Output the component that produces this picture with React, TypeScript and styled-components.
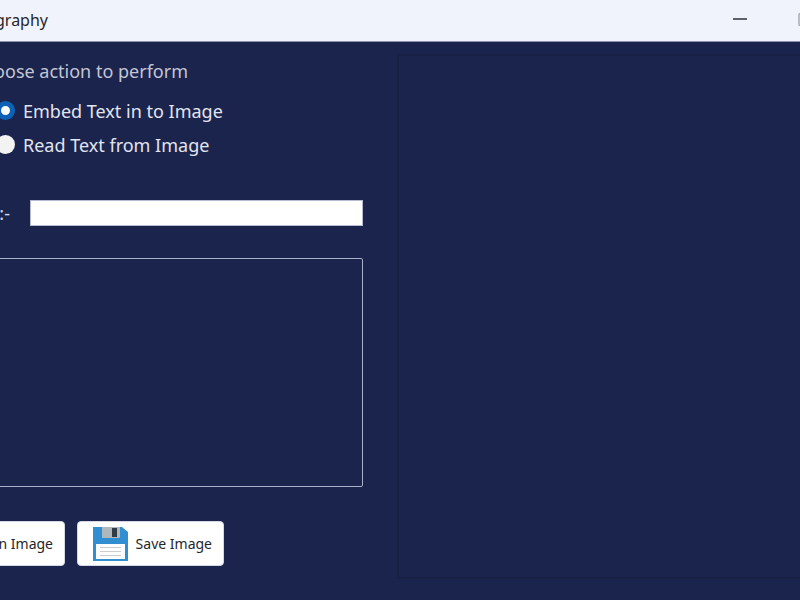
import React, { useState } from "react";
import styled, { createGlobalStyle } from "styled-components";

const GlobalStyle = createGlobalStyle`
  *, *::before, *::after { box-sizing: border-box; }
  body {
    margin: 0;
    overflow: hidden;
    background: #1b244d;
    font-family: "Noto Sans", sans-serif;
  }
`;

const Window = styled.div`
  display: flex;
  flex-direction: column;
  height: 100vh;
  overflow: hidden;
`;

const TitleBar = styled.header`
  display: flex;
  align-items: center;
  height: 42px;
  padding-bottom: 2px;
  flex: none;
  background: #f0f3fb;
  border-bottom: 1px solid #8d95ae;
`;

const TitleSlot = styled.div`
  display: flex;
  justify-content: flex-end;
  width: 48px;
  margin-right: auto;
`;

const Title = styled.h1`
  margin: 0;
  font-size: 16px;
  font-weight: 400;
  line-height: 24px;
  color: #25272d;
`;

const WindowButton = styled.button`
  display: flex;
  flex: none;
  align-items: center;
  justify-content: center;
  width: 60px;
  height: 36px;
  padding: 0;
  border: 0;
  background: transparent;
`;

const MaximizeButton = styled(WindowButton)`
  width: 30px;
  justify-content: flex-end;
`;

const Content = styled.main`
  display: flex;
  flex: 1;
  gap: 34px;
  padding: 12px 0 21px;
`;

const Form = styled.form`
  display: flex;
  flex-direction: column;
  flex: none;
  width: 363px;
`;

const Choices = styled.fieldset`
  margin: 0;
  padding: 0;
  border: 0;
  min-width: 0;
`;

const Legend = styled.legend`
  display: flex;
  justify-content: flex-end;
  width: 188px;
  padding: 4px 0 10px;
  font-size: 18px;
  line-height: 26px;
  white-space: nowrap;
  color: #c3c6d2;
`;

const Choice = styled.label`
  display: flex;
  align-items: center;
  gap: 8px;
  height: 34px;
  margin-left: -4px;
  font-size: 18px;
  color: #e2e5ef;
`;

const Radio = styled.input`
  appearance: none;
  flex: none;
  width: 19px;
  height: 19px;
  margin: 0 0 2px;
  border-radius: 50%;
  background: #f3f4f2;
  &:checked {
    background: #fff;
    border: 5px solid #0d62b5;
  }
`;

const Field = styled.div`
  display: flex;
  align-items: center;
  gap: 20px;
  margin-top: 38px;
`;

const FieldLabel = styled.label`
  display: flex;
  justify-content: flex-end;
  flex: none;
  width: 10px;
  font-size: 18px;
  line-height: 22px;
  color: #d3d7e6;
`;

const TextInput = styled.input`
  flex: 1;
  min-width: 0;
  height: 26px;
  padding: 2px 6px;
  border: 1px solid #b4bbd2;
  border-radius: 0;
  background: #fff;
  font: inherit;
`;

const Message = styled.textarea`
  flex: 1;
  margin: 32px 0 34px -8px;
  padding: 8px;
  border: 1px solid #a9b0c9;
  border-radius: 2px;
  background: transparent;
  color: #e2e5ef;
  font: inherit;
  resize: none;
`;

const Actions = styled.div`
  display: flex;
  gap: 12px;
  margin: 0 0 13px -82px;
`;

const ActionButton = styled.button`
  display: flex;
  align-items: center;
  justify-content: flex-end;
  gap: 8px;
  flex: none;
  width: 147px;
  height: 45px;
  padding: 0 11px 0 0;
  border: 1px solid #d5d8e4;
  border-radius: 4px;
  background: #fff;
  color: #25262b;
  font-family: inherit;
  font-size: 14px;
  white-space: nowrap;
`;

const Preview = styled.section`
  flex: 1;
  border: 2px solid #182044;
  border-right: 0;
`;

const FloppyIcon = () => (
  <svg width="35" height="35" viewBox="0 0 35 35" aria-hidden="true">
    <path d="M0 1h29l6 5v29H0z" fill="#318ed0" />
    <path d="M9 1h18v10q0 1-1 1H10q-1 0-1-1z" fill="#aeb8bd" />
    <path d="M19 2h5v9h-5z" fill="#303b43" />
    <path d="M3 18h29v15H3z" fill="#fdfdfd" />
    <path d="M7 21.5h21M7 25.5h21M7 29.5h21" stroke="#c9cdcf" strokeWidth="1" />
  </svg>
);

const FolderIcon = () => (
  <svg width="35" height="35" viewBox="0 0 35 35" aria-hidden="true">
    <path d="M1 6h12l3 4h17v20H1z" fill="#e9b44c" />
    <path d="M1 14h33v16H1z" fill="#f7cf74" />
  </svg>
);

export default function App() {
  const [mode, setMode] = useState("embed");
  return (
    <>
      <GlobalStyle />
      <Window>
        <TitleBar>
          <TitleSlot>
            <Title>Steganography</Title>
          </TitleSlot>
          <WindowButton type="button" aria-label="Minimize">
            <svg width="14" height="4" viewBox="0 0 14 4">
              <path d="M0 1h14" stroke="#383a42" strokeWidth="1.6" />
            </svg>
          </WindowButton>
          <MaximizeButton type="button" aria-label="Maximize">
            <svg width="2" height="13" viewBox="0 0 2 13">
              <path d="M2 .5Q1 .5 1 2v9q0 1.5 1 1.5" fill="none" stroke="#a9abb5" strokeWidth="1.5" />
            </svg>
          </MaximizeButton>
        </TitleBar>
        <Content>
          <Form onSubmit={(e) => e.preventDefault()}>
            <Choices>
              <Legend>Choose action to perform</Legend>
              <Choice>
                <Radio type="radio" name="mode" checked={mode === "embed"} onChange={() => setMode("embed")} />
                Embed Text in to Image
              </Choice>
              <Choice>
                <Radio type="radio" name="mode" checked={mode === "read"} onChange={() => setMode("read")} />
                Read Text from Image
              </Choice>
            </Choices>
            <Field>
              <FieldLabel htmlFor="text">Text:-</FieldLabel>
              <TextInput id="text" type="text" />
            </Field>
            <Message aria-label="Message" />
            <Actions>
              <ActionButton type="button">
                <FolderIcon />
                Open Image
              </ActionButton>
              <ActionButton type="submit">
                <FloppyIcon />
                Save Image
              </ActionButton>
            </Actions>
          </Form>
          <Preview aria-label="Image preview" />
        </Content>
      </Window>
    </>
  );
}
